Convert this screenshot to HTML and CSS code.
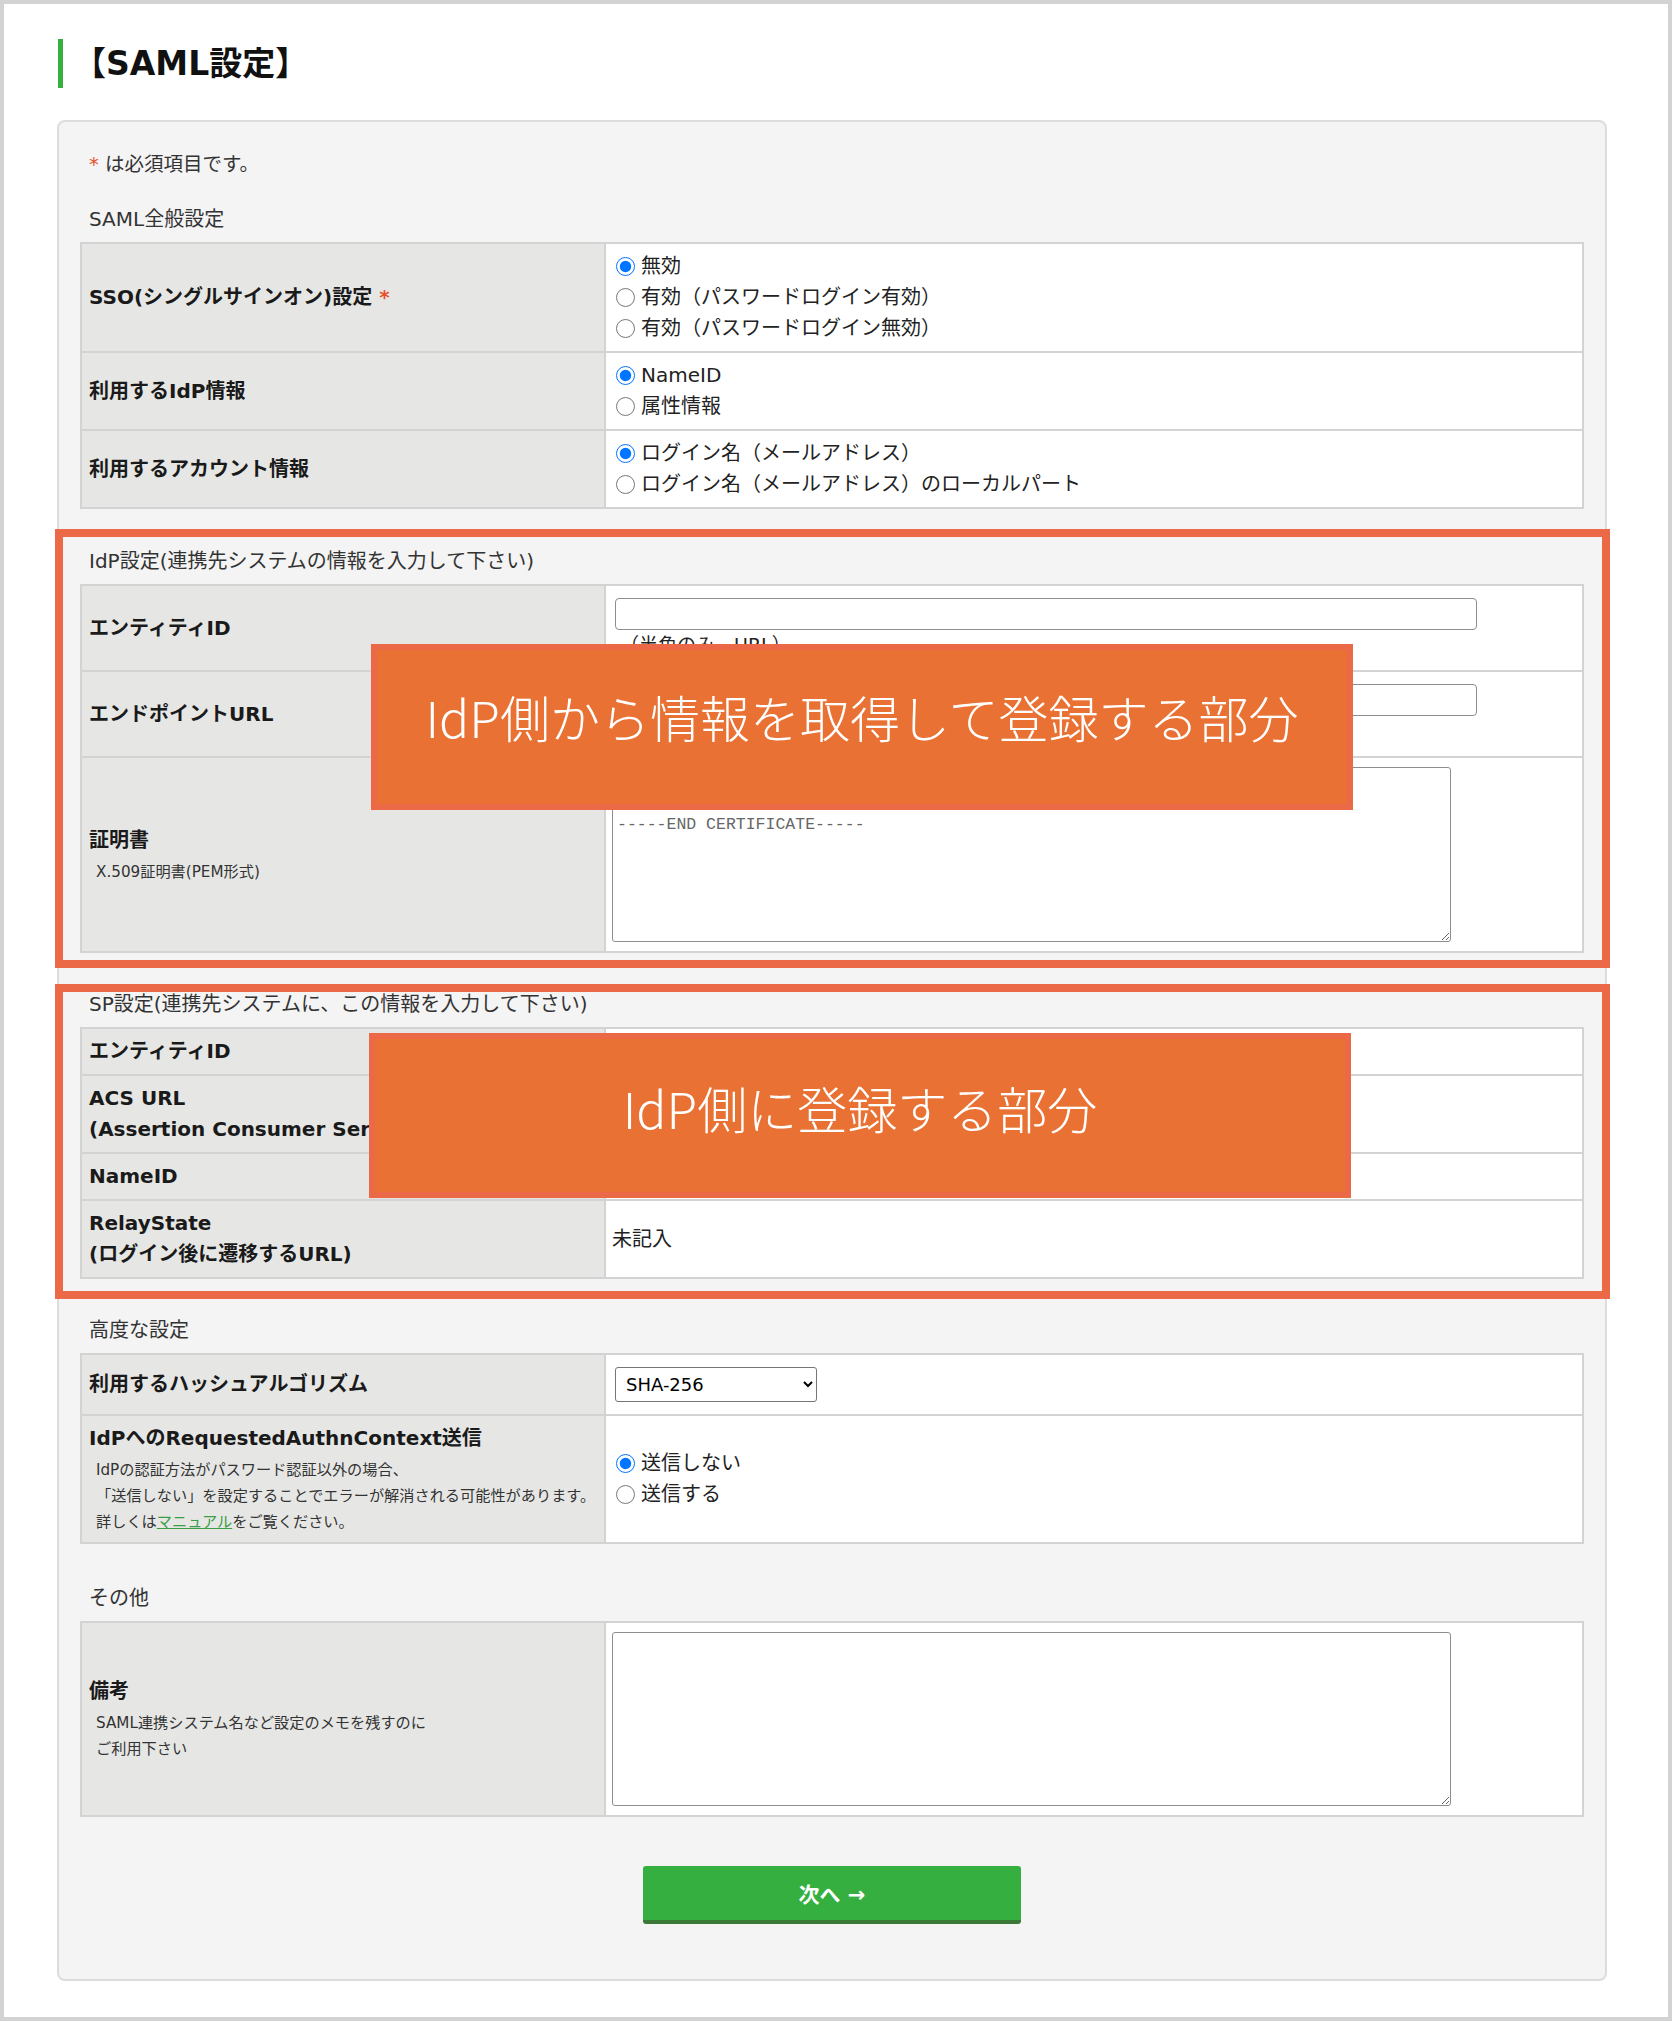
FILE: index.html
```html
<!DOCTYPE html>
<html lang="ja">
<head>
    <meta charset="utf-8" />
    <title>SAML設定</title>
    <meta name="viewport" content="width=device-width, initial-scale=1" />
    <link rel="stylesheet" href="styles.css">
</head>
<body>
    <div class="page">
        <h1 class="page-title">【SAML設定】</h1>

        <form id="frm_saml" class="panel">
            <p class="note"><span class="req">*</span> は必須項目です。</p>

            <!-- SAML全般設定 -->
            <section class="block">
                <h2 class="block-title">SAML全般設定</h2>
                <table class="form-table">
                    <colgroup><col class="label-col" /><col /></colgroup>
                    <tr>
                        <th>SSO(シングルサインオン)設定 <span class="req">*</span></th>
                        <td>
                            <label class="choice"><input type="radio" name="sso" checked />無効</label>
                            <label class="choice"><input type="radio" name="sso" />有効（パスワードログイン有効）</label>
                            <label class="choice"><input type="radio" name="sso" />有効（パスワードログイン無効）</label>
                        </td>
                    </tr>
                    <tr>
                        <th>利用するIdP情報</th>
                        <td>
                            <label class="choice"><input type="radio" name="idpinfo" checked />NameID</label>
                            <label class="choice"><input type="radio" name="idpinfo" />属性情報</label>
                        </td>
                    </tr>
                    <tr>
                        <th>利用するアカウント情報</th>
                        <td>
                            <label class="choice"><input type="radio" name="account" checked />ログイン名（メールアドレス）</label>
                            <label class="choice"><input type="radio" name="account" />ログイン名（メールアドレス）のローカルパート</label>
                        </td>
                    </tr>
                </table>
            </section>

            <!-- IdP設定 -->
            <section class="block mark mark-idp">
                <h2 class="block-title">IdP設定(連携先システムの情報を入力して下さい)</h2>
                <table class="form-table">
                    <colgroup><col class="label-col" /><col /></colgroup>
                    <tr>
                        <th>エンティティID</th>
                        <td class="field">
                            <input type="text" class="txt" id="txt_entity" />
                            <div class="hint">（半角のみ、URL）</div>
                        </td>
                    </tr>
                    <tr>
                        <th>エンドポイントURL</th>
                        <td class="field">
                            <input type="text" class="txt" id="txt_endpoint" />
                            <div class="hint">（半角のみ、URL）</div>
                        </td>
                    </tr>
                    <tr>
                        <th>証明書<div class="desc">X.509証明書(PEM形式)</div></th>
                        <td class="field">
                            <textarea class="area mono" id="txt_cert" placeholder="-----BEGIN CERTIFICATE-----&#10;証明書の内容を入力&#10;-----END CERTIFICATE-----"></textarea>
                        </td>
                    </tr>
                </table>
                <div class="callout callout-idp">IdP側から情報を取得して登録する部分</div>
            </section>

            <!-- SP設定 -->
            <section class="block mark mark-sp">
                <h2 class="block-title">SP設定(連携先システムに、この情報を入力して下さい)</h2>
                <table class="form-table">
                    <colgroup><col class="label-col" /><col /></colgroup>
                    <tr>
                        <th>エンティティID</th>
                        <td></td>
                    </tr>
                    <tr>
                        <th>ACS URL<br />(Assertion Consumer Service URL)</th>
                        <td></td>
                    </tr>
                    <tr>
                        <th>NameID</th>
                        <td></td>
                    </tr>
                    <tr>
                        <th>RelayState<br />(ログイン後に遷移するURL)</th>
                        <td>未記入</td>
                    </tr>
                </table>
                <div class="callout callout-sp">IdP側に登録する部分</div>
            </section>

            <!-- 高度な設定 -->
            <section class="block block-advanced">
                <h2 class="block-title">高度な設定</h2>
                <table class="form-table">
                    <colgroup><col class="label-col" /><col /></colgroup>
                    <tr>
                        <th>利用するハッシュアルゴリズム</th>
                        <td>
                            <select class="sel" id="sel_hash">
                                <option>SHA-256</option>
                                <option>SHA-1</option>
                            </select>
                        </td>
                    </tr>
                    <tr>
                        <th>IdPへのRequestedAuthnContext送信
                            <div class="desc">IdPの認証方法がパスワード認証以外の場合、<br />「送信しない」を設定することでエラーが解消される可能性があります。<br />詳しくは<a href="#" class="lnk">マニュアル</a>をご覧ください。</div>
                        </th>
                        <td>
                            <label class="choice"><input type="radio" name="authn" checked />送信しない</label>
                            <label class="choice"><input type="radio" name="authn" />送信する</label>
                        </td>
                    </tr>
                </table>
            </section>

            <!-- その他 -->
            <section class="block block-other">
                <h2 class="block-title">その他</h2>
                <table class="form-table">
                    <colgroup><col class="label-col" /><col /></colgroup>
                    <tr>
                        <th>備考<div class="desc">SAML連携システム名など設定のメモを残すのに<br />ご利用下さい</div></th>
                        <td class="field">
                            <textarea class="area area-memo" id="txt_memo"></textarea>
                        </td>
                    </tr>
                </table>
            </section>

            <div class="actions">
                <button type="button" id="btn_next" class="nextbtn">次へ →</button>
            </div>
        </form>
    </div>
</body>
</html>
```

FILE: styles.css
```css
* {
    box-sizing: border-box;
}

html, body {
    margin: 0;
}

body {
    font-family: "DejaVu Sans", "Noto Sans CJK JP", sans-serif;
    color: #222;
    background: #fff;
}

.page {
    height: 2021px;
    border: 4px solid #d3d3d3;
    padding: 35px 61px 0 53px;
    overflow: hidden;
}

.page-title {
    margin: 0 0 0 1px;
    height: 49px;
    border-left: 5px solid #35b040;
    padding-left: 10px;
    font-size: 33px;
    line-height: 49px;
    font-weight: bold;
    color: #111;
}

.panel {
    margin-top: 32px;
    background: #f4f4f4;
    border: 2px solid #dcdcdc;
    border-radius: 8px;
    padding: 31px 21px 55px;
}

.note {
    margin: 0 0 0 9px;
    font-size: 19.5px;
    line-height: 24px;
    color: #333;
}

.req {
    color: #e8502a;
}

.block {
    margin-top: 30px;
}

.block-title {
    margin: 0 0 11px 9px;
    font-size: 20px;
    line-height: 24px;
    font-weight: normal;
    color: #333;
}

/* annotation frames */
.mark {
    position: relative;
    margin: 20px -26px 0 -25px;
    border: 8px solid #ec6947;
    padding: 12px 18px 7px 17px;
}

.mark-sp {
    margin-top: 16px;
    padding-top: 0;
    padding-bottom: 12px;
}

.block-advanced {
    margin-top: 19px;
}

.block-other {
    margin-top: 42px;
}

.form-table {
    width: 100%;
    table-layout: fixed;
    border-collapse: collapse;
    background: #fff;
    border: 2px solid #d3d3d3;
}

.label-col {
    width: 524px;
}

.form-table th,
.form-table td {
    border: 2px solid #d3d3d3;
    padding: 7px 6px;
    line-height: 31px;
    vertical-align: middle;
    text-align: left;
}

.form-table th {
    background: #e6e7e5;
    font-size: 20px;
    font-weight: bold;
    color: #1a1a1a;
    padding-left: 7px;
}

.form-table td {
    font-size: 20px;
    color: #222;
}

.desc {
    font-size: 15.2px;
    line-height: 26px;
    font-weight: normal;
    padding-left: 7px;
    margin-top: 3px;
    color: #333;
}

.lnk {
    color: #3a9e45;
}

.choice {
    display: flex;
    align-items: center;
    gap: 6px;
    line-height: 31px;
}

.choice input {
    margin: 0 0 0 4px;
    width: 19px;
    height: 19px;
}

.txt {
    display: block;
    width: 862px;
    height: 32px;
    margin: 5px 0 0 3px;
    border: 1px solid #8d8d8d;
    border-radius: 4px;
    font-size: 18px;
}

.hint {
    font-size: 19px;
    line-height: 30px;
    padding: 0 0 3px 8px;
}

.area {
    display: block;
    width: 839px;
    height: 175px;
    margin: 2px 0;
    border: 1px solid #8d8d8d;
    border-radius: 3px;
    padding: 2px 4px;
    font-size: 17px;
    line-height: 22px;
}

.area-memo {
    height: 174px;
}

.mono {
    font-family: "Liberation Mono", monospace;
    font-size: 16.5px;
}

.mono::placeholder {
    color: #666;
}

.sel {
    display: block;
    width: 202px;
    height: 35px;
    margin: 5px 0 5px 3px;
    font-family: "DejaVu Sans", sans-serif;
    font-size: 18px;
    border: 1px solid #767676;
    border-radius: 3px;
    background: #fff;
    padding-left: 6px;
}

.callout {
    position: absolute;
    display: flex;
    align-items: center;
    justify-content: center;
    background: #e87133;
    border: 6px solid #ec6947;
    color: #fff;
    font-family: "Noto Sans CJK JP", sans-serif;
    font-size: 50px;
    font-weight: 300;
    padding-bottom: 22px;
}

.callout-idp {
    left: 308px;
    top: 107px;
    width: 982px;
    height: 166px;
}

.callout-sp {
    left: 306px;
    top: 41px;
    width: 982px;
    height: 165px;
    padding-bottom: 18px;
}

.actions {
    margin-top: 49px;
    text-align: center;
}

.nextbtn {
    width: 378px;
    height: 58px;
    background-color: #35b040;
    border: none;
    border-bottom: 4px solid #3b7a36;
    border-radius: 3px;
    color: white;
    font-family: "DejaVu Sans", "Noto Sans CJK JP", sans-serif;
    font-size: 21px;
    font-weight: bold;
    cursor: pointer;
}

.nextbtn:hover {
    opacity: 0.8;
}
```
